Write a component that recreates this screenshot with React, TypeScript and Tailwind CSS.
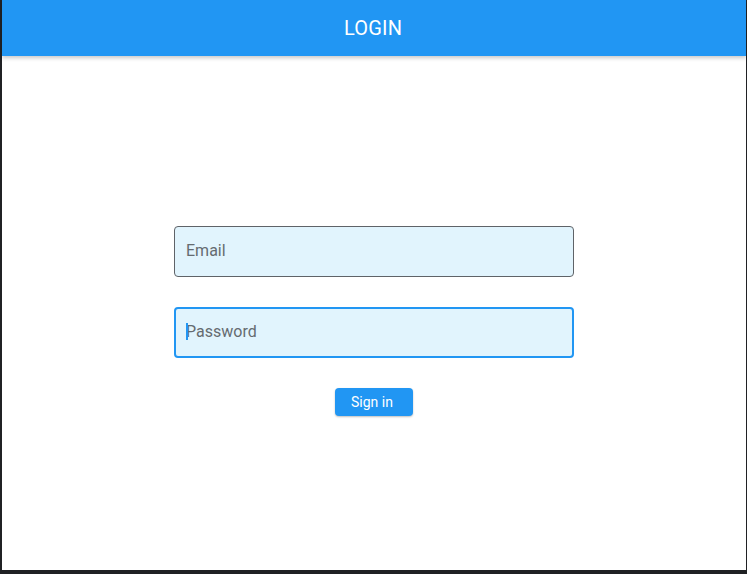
import React from 'react';

const font = { fontFamily: 'Roboto, "Noto Sans", sans-serif' };

const App: React.FC = () => {
  return (
    <div className="h-[574px] w-[747px] bg-[#202124] pl-[2px] pr-[1px] pb-[4px]" style={font}>
      <div className="flex h-full flex-col bg-white">
        <header className="relative z-10 flex h-[56px] shrink-0 items-center justify-center bg-[#2196f3] pr-[2px] shadow-[0_2px_4px_rgba(0,0,0,0.22)]">
          <h1 className="text-[20px] font-normal tracking-[0.2px] text-white">LOGIN</h1>
        </header>

        <main className="flex flex-1 flex-col items-center pt-[170px]">
          <div className="flex h-[51px] w-[400px] items-center rounded-[4px] border border-[#5f6368] bg-[#e1f4fd] px-[11px] pb-[2px]">
            <input
              type="email"
              placeholder="Email"
              className="w-full bg-transparent text-[16px] text-[#202124] outline-none placeholder:text-[#656b70]"
            />
          </div>

          <div className="relative mt-[30px] flex h-[51px] w-[400px] items-center rounded-[4px] border-2 border-[#2196f3] bg-[#e1f4fd] px-[10px] pb-[2px]">
            <span className="absolute left-[10px] top-[14px] h-[17px] w-[2px] bg-[#2196f3]" />
            <input
              type="password"
              placeholder="Password"
              className="w-full bg-transparent text-[16px] text-[#202124] caret-transparent outline-none placeholder:text-[#656b70]"
            />
          </div>

          <button className="mt-[30px] h-[28px] w-[78px] rounded-[4px] bg-[#2196f3] pr-[4px] text-[14px] text-white shadow-[0_1px_2px_rgba(0,0,0,0.25)]">
            Sign in
          </button>
        </main>
      </div>
    </div>
  );
};

export default App;
